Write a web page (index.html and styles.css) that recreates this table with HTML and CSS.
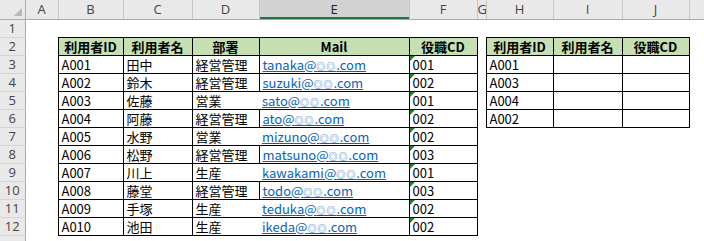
FILE: index.html
```html
<!DOCTYPE html>
<html lang="ja">
<head>
<meta charset="utf-8">
<title>Sheet</title>
<link rel="stylesheet" href="styles.css">
</head>
<body>
<table class="sheet">
<colgroup>
<col class="w-rh"><col class="w-a"><col class="w-b"><col class="w-c"><col class="w-d"><col class="w-e"><col class="w-f"><col class="w-g"><col class="w-h"><col class="w-i"><col class="w-j"><col class="w-k">
</colgroup>
<thead>
<tr>
<th class="corner"><span class="tri"></span></th>
<th class="ch">A</th><th class="ch">B</th><th class="ch">C</th><th class="ch">D</th><th class="ch sel">E</th><th class="ch">F</th><th class="ch">G</th><th class="ch">H</th><th class="ch">I</th><th class="ch">J</th><th class="ch"></th>
</tr>
</thead>
<tbody>
<tr><th class="rh">1</th><td></td><td></td><td></td><td></td><td></td><td></td><td></td><td></td><td></td><td></td><td></td></tr>
<tr><th class="rh">2</th><td></td><td class="b hd">利用者ID</td><td class="b hd">利用者名</td><td class="b hd">部署</td><td class="b hd">Mail</td><td class="b hd">役職CD</td><td></td><td class="b hd">利用者ID</td><td class="b hd">利用者名</td><td class="b hd">役職CD</td><td></td></tr>
<tr><th class="rh">3</th><td></td><td class="b">A001</td><td class="b">田中</td><td class="b">経営管理</td><td class="b"><a href="#">tanaka@<span class="mk">◎◎</span>.com</a></td><td class="b tx">001</td><td></td><td class="b">A001</td><td class="b"></td><td class="b"></td><td></td></tr>
<tr><th class="rh">4</th><td></td><td class="b">A002</td><td class="b">鈴木</td><td class="b">経営管理</td><td class="b"><a href="#">suzuki@<span class="mk">◎◎</span>.com</a></td><td class="b tx">002</td><td></td><td class="b">A003</td><td class="b"></td><td class="b"></td><td></td></tr>
<tr><th class="rh">5</th><td></td><td class="b">A003</td><td class="b">佐藤</td><td class="b">営業</td><td class="b nol"><a href="#">sato@<span class="mk">◎◎</span>.com</a></td><td class="b tx">001</td><td></td><td class="b">A004</td><td class="b"></td><td class="b"></td><td></td></tr>
<tr><th class="rh">6</th><td></td><td class="b">A004</td><td class="b">阿藤</td><td class="b">経営管理</td><td class="b"><a href="#">ato@<span class="mk">◎◎</span>.com</a></td><td class="b tx">002</td><td></td><td class="b">A002</td><td class="b"></td><td class="b"></td><td></td></tr>
<tr><th class="rh">7</th><td></td><td class="b">A005</td><td class="b">水野</td><td class="b">営業</td><td class="b nol"><a href="#">mizuno@<span class="mk">◎◎</span>.com</a></td><td class="b tx">002</td><td></td><td></td><td></td><td></td><td></td></tr>
<tr><th class="rh">8</th><td></td><td class="b">A006</td><td class="b">松野</td><td class="b">経営管理</td><td class="b"><a href="#">matsuno@<span class="mk">◎◎</span>.com</a></td><td class="b tx">003</td><td></td><td></td><td></td><td></td><td></td></tr>
<tr><th class="rh">9</th><td></td><td class="b">A007</td><td class="b">川上</td><td class="b">生産</td><td class="b nol"><a href="#">kawakami@<span class="mk">◎◎</span>.com</a></td><td class="b tx">001</td><td></td><td></td><td></td><td></td><td></td></tr>
<tr><th class="rh">10</th><td></td><td class="b">A008</td><td class="b">藤堂</td><td class="b">経営管理</td><td class="b"><a href="#">todo@<span class="mk">◎◎</span>.com</a></td><td class="b tx">003</td><td></td><td></td><td></td><td></td><td></td></tr>
<tr><th class="rh">11</th><td></td><td class="b">A009</td><td class="b">手塚</td><td class="b">生産</td><td class="b nol"><a href="#">teduka@<span class="mk">◎◎</span>.com</a></td><td class="b tx">002</td><td></td><td></td><td></td><td></td><td></td></tr>
<tr><th class="rh">12</th><td></td><td class="b">A010</td><td class="b">池田</td><td class="b">生産</td><td class="b nol"><a href="#">ikeda@<span class="mk">◎◎</span>.com</a></td><td class="b tx">002</td><td></td><td></td><td></td><td></td><td></td></tr>
<tr><th class="rh"></th><td></td><td></td><td></td><td></td><td></td><td></td><td></td><td></td><td></td><td></td><td></td></tr>
</tbody>
</table>
</body>
</html>
```
FILE: styles.css
```css
html, body {
  margin: 0;
  padding: 0;
  background: #fff;
  overflow: hidden;
}
.sheet {
  border-collapse: collapse;
  table-layout: fixed;
  width: 704px;
  font-family: "Noto Sans CJK JP", "Liberation Sans", sans-serif;
  font-size: 13px;
  color: #000;
}
.w-rh { width: 25px; }
.w-a { width: 33px; }
.w-b { width: 65px; }
.w-c { width: 69px; }
.w-d { width: 67px; }
.w-e { width: 150px; }
.w-f { width: 68px; }
.w-g { width: 9px; }
.w-h { width: 67px; }
.w-i { width: 69px; }
.w-j { width: 67px; }
.w-k { width: 15px; }

thead tr { height: 19px; }
tbody tr { height: 18px; }

.sheet td, .sheet th {
  padding: 0 3px;
  height: 17px;
  line-height: 13px;
  white-space: nowrap;
  overflow: hidden;
  text-align: left;
  font-weight: normal;
}
.corner {
  position: relative;
  background: #e9e9e9;
  border-right: 1px solid #ababab;
  border-bottom: 1px solid #ababab;
}
.tri {
  position: absolute;
  right: 3px;
  bottom: 3px;
  width: 0;
  height: 0;
  border-left: 8px solid transparent;
  border-bottom: 8px solid #b8b8b8;
}
.ch {
  background: #e9e9e9;
  color: #444;
  font-family: "Open Sans", "Liberation Sans", sans-serif;
  font-size: 13px;
  border-left: 1px solid #c6c6c6;
  border-right: 1px solid #c6c6c6;
  border-bottom: 1px solid #ababab;
}
.sheet .ch {
  text-align: center;
  padding: 0;
}
.ch.sel {
  background: #d2d2d2;
  color: #222;
  box-shadow: inset 0 -2px 0 #217346;
}
.sheet .rh {
  background: #e9e9e9;
  color: #444;
  font-family: "Open Sans", "Liberation Sans", sans-serif;
  font-size: 13px;
  text-align: center;
  padding: 0;
  border-right: 1px solid #ababab;
  border-bottom: 1px solid #d4d4d4;
}
.b {
  border: 1px solid #000;
}
.sheet .hd {
  background: #c6e0b4;
  font-weight: bold;
  text-align: center;
}
.nol {
  border-left-style: hidden;
}
.tx {
  position: relative;
}
.tx::before {
  content: "";
  position: absolute;
  left: 0;
  top: 0;
  border-top: 5px solid #1e7e34;
  border-right: 5px solid transparent;
}
a {
  color: #0563c1;
  text-decoration: underline;
}
.mk {
  font-size: 9px;
  line-height: 1;
  letter-spacing: 1px;
}
```
